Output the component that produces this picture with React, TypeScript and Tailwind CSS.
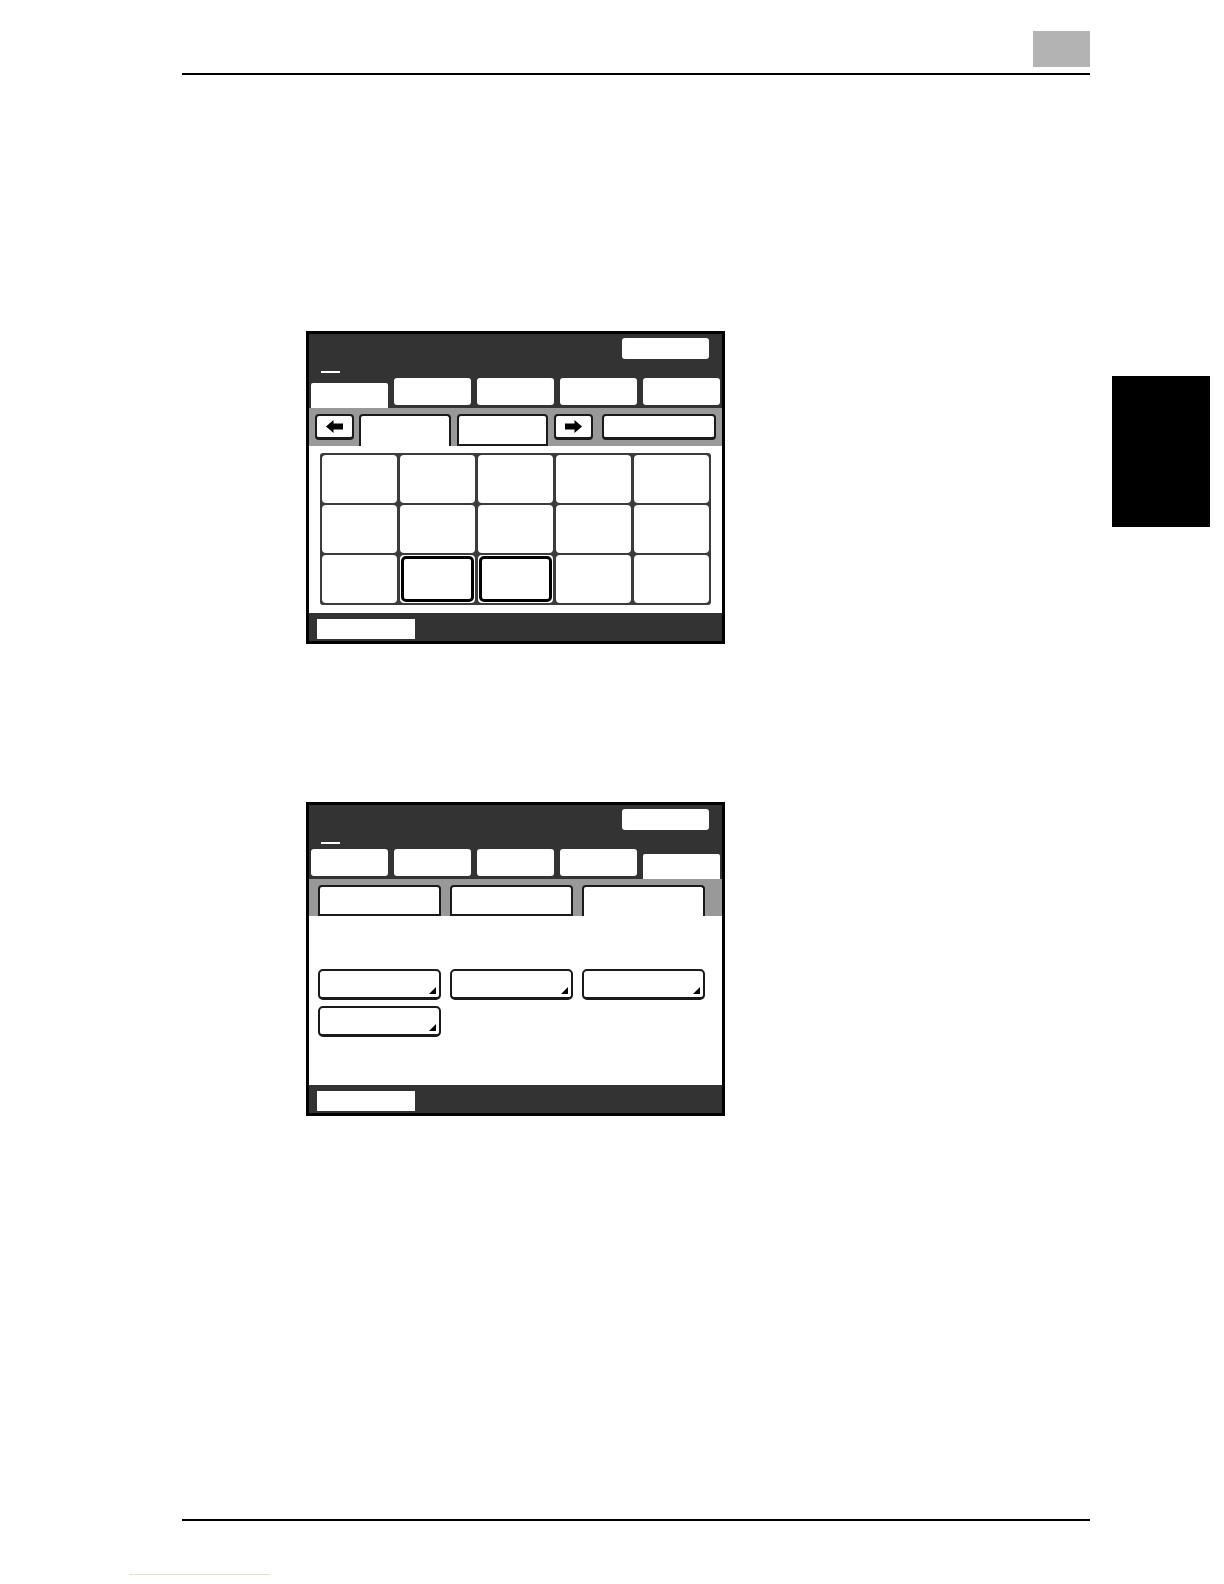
import React from "react";

function ArrowIcon({ dir }: { dir: "left" | "right" }) {
  return (
    <svg width="17" height="13" viewBox="0 0 17 13" className={dir === "right" ? "rotate-180" : ""}>
      <path d="M0 6.5 L7.5 0 V3.5 H17 V9.5 H7.5 V13 Z" fill="#000" />
    </svg>
  );
}

function TopTabs({ active }: { active: number }) {
  return (
    <div className="flex h-[35px] items-start gap-[6px] pl-[2px]">
      {[0, 1, 2, 3, 4].map((i) =>
        i === active ? (
          <div key={i} className="mt-[10px] h-[25px] w-[77px] rounded-t-[2px] bg-white" />
        ) : (
          <div key={i} className="mt-[5px] h-[27px] w-[77px] rounded-[3px] bg-white" />
        ),
      )}
    </div>
  );
}

function PanelHeader({ active }: { active: number }) {
  return (
    <div className="bg-[#333333]">
      <div className="flex justify-end pr-[13px] pt-[4px]">
        <div className="h-[21px] w-[87px] rounded-[3px] bg-white" />
      </div>
      <div className="ml-[12px] mt-[12px] h-[2px] w-[19px] bg-white" />
      <TopTabs active={active} />
    </div>
  );
}

function PanelFooter() {
  return (
    <div className="h-[28px] bg-[#333333] pl-[8px] pt-[6px]">
      <div className="h-[20px] w-[98px] bg-white" />
    </div>
  );
}

function SmallButton({ dir }: { dir: "left" | "right" }) {
  return (
    <div className="flex h-[26px] w-[39px] items-center justify-center rounded-[4px] border-2 border-b-[3px] border-[#1a1a1a] bg-white">
      <ArrowIcon dir={dir} />
    </div>
  );
}

function CopyPanel() {
  const cells = Array.from({ length: 15 }, (_, i) => i);
  return (
    <div className="ml-[306px] mt-[256px] flex h-[313px] w-[419px] flex-col border-[3px] border-black">
      <PanelHeader active={0} />
      <div className="flex h-[38px] items-start bg-[#999999] pl-[6px] pt-[6px]">
        <SmallButton dir="left" />
        <div className="ml-[5px] h-[32px] w-[92px] rounded-t-[4px] border-2 border-b-0 border-[#1a1a1a] bg-white" />
        <div className="ml-[6px] h-[32px] w-[91px] rounded-t-[4px] border-2 border-[#1a1a1a] bg-white" />
        <div className="ml-[6px]">
          <SmallButton dir="right" />
        </div>
        <div className="ml-[9px] h-[26px] w-[114px] rounded-[4px] border-2 border-b-[3px] border-[#1a1a1a] bg-white" />
      </div>
      <div className="flex-1 bg-white px-[11px] pt-[7px]">
        <div className="grid grid-cols-5 gap-x-[3px] gap-y-[2px] rounded-[3px] bg-[#3c3c3c] p-[2px]">
          {cells.map((i) =>
            i === 11 || i === 12 ? (
              <div key={i} className="h-[48px] rounded-[4px] bg-white p-[1px]">
                <div className="h-full rounded-[5px] border-[3px] border-black" />
              </div>
            ) : (
              <div key={i} className="h-[48px] rounded-[4px] bg-white" />
            ),
          )}
        </div>
      </div>
      <PanelFooter />
    </div>
  );
}

function SelectButton() {
  return (
    <div className="flex h-[31px] w-[123px] items-end justify-end rounded-[5px] border-2 border-b-[3px] border-[#1a1a1a] bg-white pb-[3px] pr-[3px]">
      <div className="h-[7px] w-[7px] bg-black [clip-path:polygon(100%_0,100%_100%,0_100%)]" />
    </div>
  );
}

function SettingsPanel() {
  return (
    <div className="ml-[306px] mt-[158px] flex h-[314px] w-[419px] flex-col border-[3px] border-black">
      <PanelHeader active={4} />
      <div className="flex h-[37px] items-start gap-[9px] bg-[#999999] pl-[9px] pt-[6px]">
        <div className="h-[31px] w-[123px] rounded-t-[4px] border-2 border-[#1a1a1a] bg-white" />
        <div className="h-[31px] w-[123px] rounded-t-[4px] border-2 border-[#1a1a1a] bg-white" />
        <div className="h-[31px] w-[123px] rounded-t-[4px] border-2 border-b-0 border-[#1a1a1a] bg-white" />
      </div>
      <div className="flex-1 bg-white px-[9px] pt-[53px]">
        <div className="grid w-[387px] grid-cols-3 gap-x-[9px] gap-y-[6px]">
          <SelectButton />
          <SelectButton />
          <SelectButton />
          <SelectButton />
        </div>
      </div>
      <PanelFooter />
    </div>
  );
}

export default function App() {
  return (
    <div className="relative h-[1584px] w-[1224px] overflow-hidden bg-white font-['Liberation_Sans',sans-serif]">
      <header className="ml-[182px] w-[908px]">
        <div className="flex justify-end pt-[31px]">
          <div className="h-[36px] w-[57px] bg-[#b3b3b3]" />
        </div>
        <div className="mt-[6px] h-[2px] bg-black" />
      </header>

      <CopyPanel />
      <SettingsPanel />

      <div className="ml-[182px] mt-[403px] h-[2px] w-[908px] bg-black" />
      <div className="ml-[129px] mt-[53px] h-[1px] w-[141px] bg-[#e4e4c4]" />

      <div className="absolute left-[1112px] top-[376px] h-[151px] w-[98px] bg-black" />
    </div>
  );
}
